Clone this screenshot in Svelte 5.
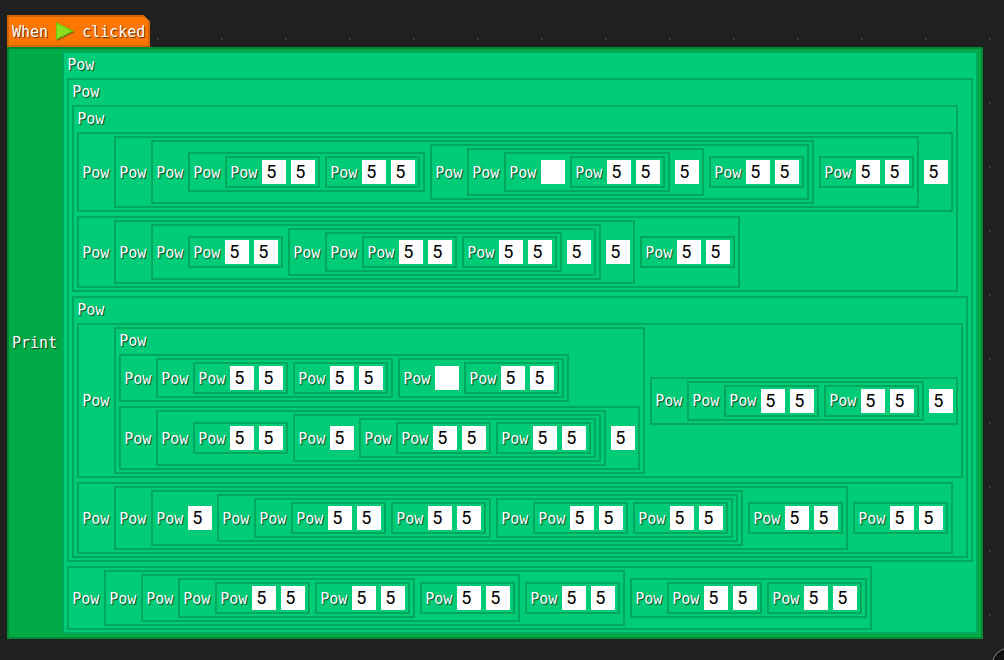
<script lang="ts">
	type Node = string | Node[] | { rows: Node[] }

	// a plain array is a Pow block, a string is a literal slot,
	// `rows` marks a Pow whose arguments are stacked
	const p: Node = ['5', '5']

	const first: Node = [[[[p, p], [[['', p], '5'], p]], p], '5']
	const second: Node = [[[p, [[p, p], '5']], '5'], p]
	const third: Node = [
		{ rows: [
			[[p, p], ['', p]],
			[[p, ['5', [p, p]]], '5']
		] },
		[[p, p], '5']
	]
	const fourth: Node = [[['5', [[p, p], [p, p]]], p], p]
	const fifth: Node = [[[[p, p], p], p], [p, p]]

	const program: Node = {
		rows: [
			{ rows: [{ rows: [first, second] }, { rows: [third, fourth] }] },
			fifth
		]
	}
</script>

{#snippet block(node)}
	{#if typeof node === 'string'}
		<input class="slot" type="text" value={node} aria-label="Value">
	{:else}
		<div class="pow" class:stacked={!Array.isArray(node)}>
			<span class="label">Pow</span>
			{#each Array.isArray(node) ? node : node.rows as child}
				{@render block(child)}
			{/each}
		</div>
	{/if}
{/snippet}

<main class="canvas">
	<div class="script">
		<div class="hat">
			<span class="text">When</span>
			<svg class="flag" viewBox="0 0 20 20" aria-hidden="true">
				<path d="M2 2 L20 11 L2 20 Z" fill="#5a4a10" opacity="0.7" />
				<path d="M1 1 L19 10 L1 19 Z" fill="#6cc814" />
				<path d="M2 3 L16 10 L2 17 Z" fill="#8ce01e" />
			</svg>
			<span class="text">clicked</span>
		</div>
		<div class="print">
			<span class="text">Print</span>
			{@render block(program)}
		</div>
	</div>
	<button class="corner" aria-label="Zoom"></button>
</main>

<style>
:global(body) {
	background: #202020;
}
.canvas {
	position: relative;
	box-sizing: border-box;
	min-height: 100vh;
	padding: 15px 7px 21px;
	overflow: hidden;
	background: #202020 radial-gradient(circle at 30px 39px, #808080 0, #202020 1px) 0 0 / 64px 64px;
	font-family: "DejaVu Sans Mono", monospace;
	font-size: 15px;
	color: #fff;
	text-shadow: 1px 1px 1px #000a;
}
.script {
	display: flex;
	flex-direction: column;
	align-items: flex-start;
}
.hat {
	display: flex;
	align-items: center;
	gap: 7px;
	box-sizing: border-box;
	height: 32px;
	padding: 0 3px;
	background: #ff7700;
	border: 2px solid #d46400;
	clip-path: polygon(0 0, calc(100% - 7px) 0, 100% 7px, 100% 100%, 0 100%);
}
.flag {
	width: 20px;
	height: 20px;
}
.print,
.pow {
	display: flex;
	align-items: center;
	flex-shrink: 0;
	gap: 5px;
	padding: 2px 3px;
	border: 2px solid #00a85e;
	background: #00cc77;
}
.print {
	padding-bottom: 3px;
	background: #00aa44;
	border-color: #008837;
}
.stacked {
	flex-direction: column;
	align-items: flex-start;
	gap: 4px;
}
.text,
.label {
	padding-top: 2px;
	line-height: 17px;
}
.label {
	width: 27px;
}
.slot {
	box-sizing: border-box;
	width: 24px;
	height: 24px;
	padding: 0 4px 1px;
	border: 0;
	background: #fff;
	color: #000;
	font: 18px Roboto, sans-serif;
}
.corner {
	position: absolute;
	right: -20px;
	bottom: -20px;
	width: 32px;
	height: 32px;
	border: 1px solid #888;
	border-radius: 50%;
	background: #111;
}
</style>
